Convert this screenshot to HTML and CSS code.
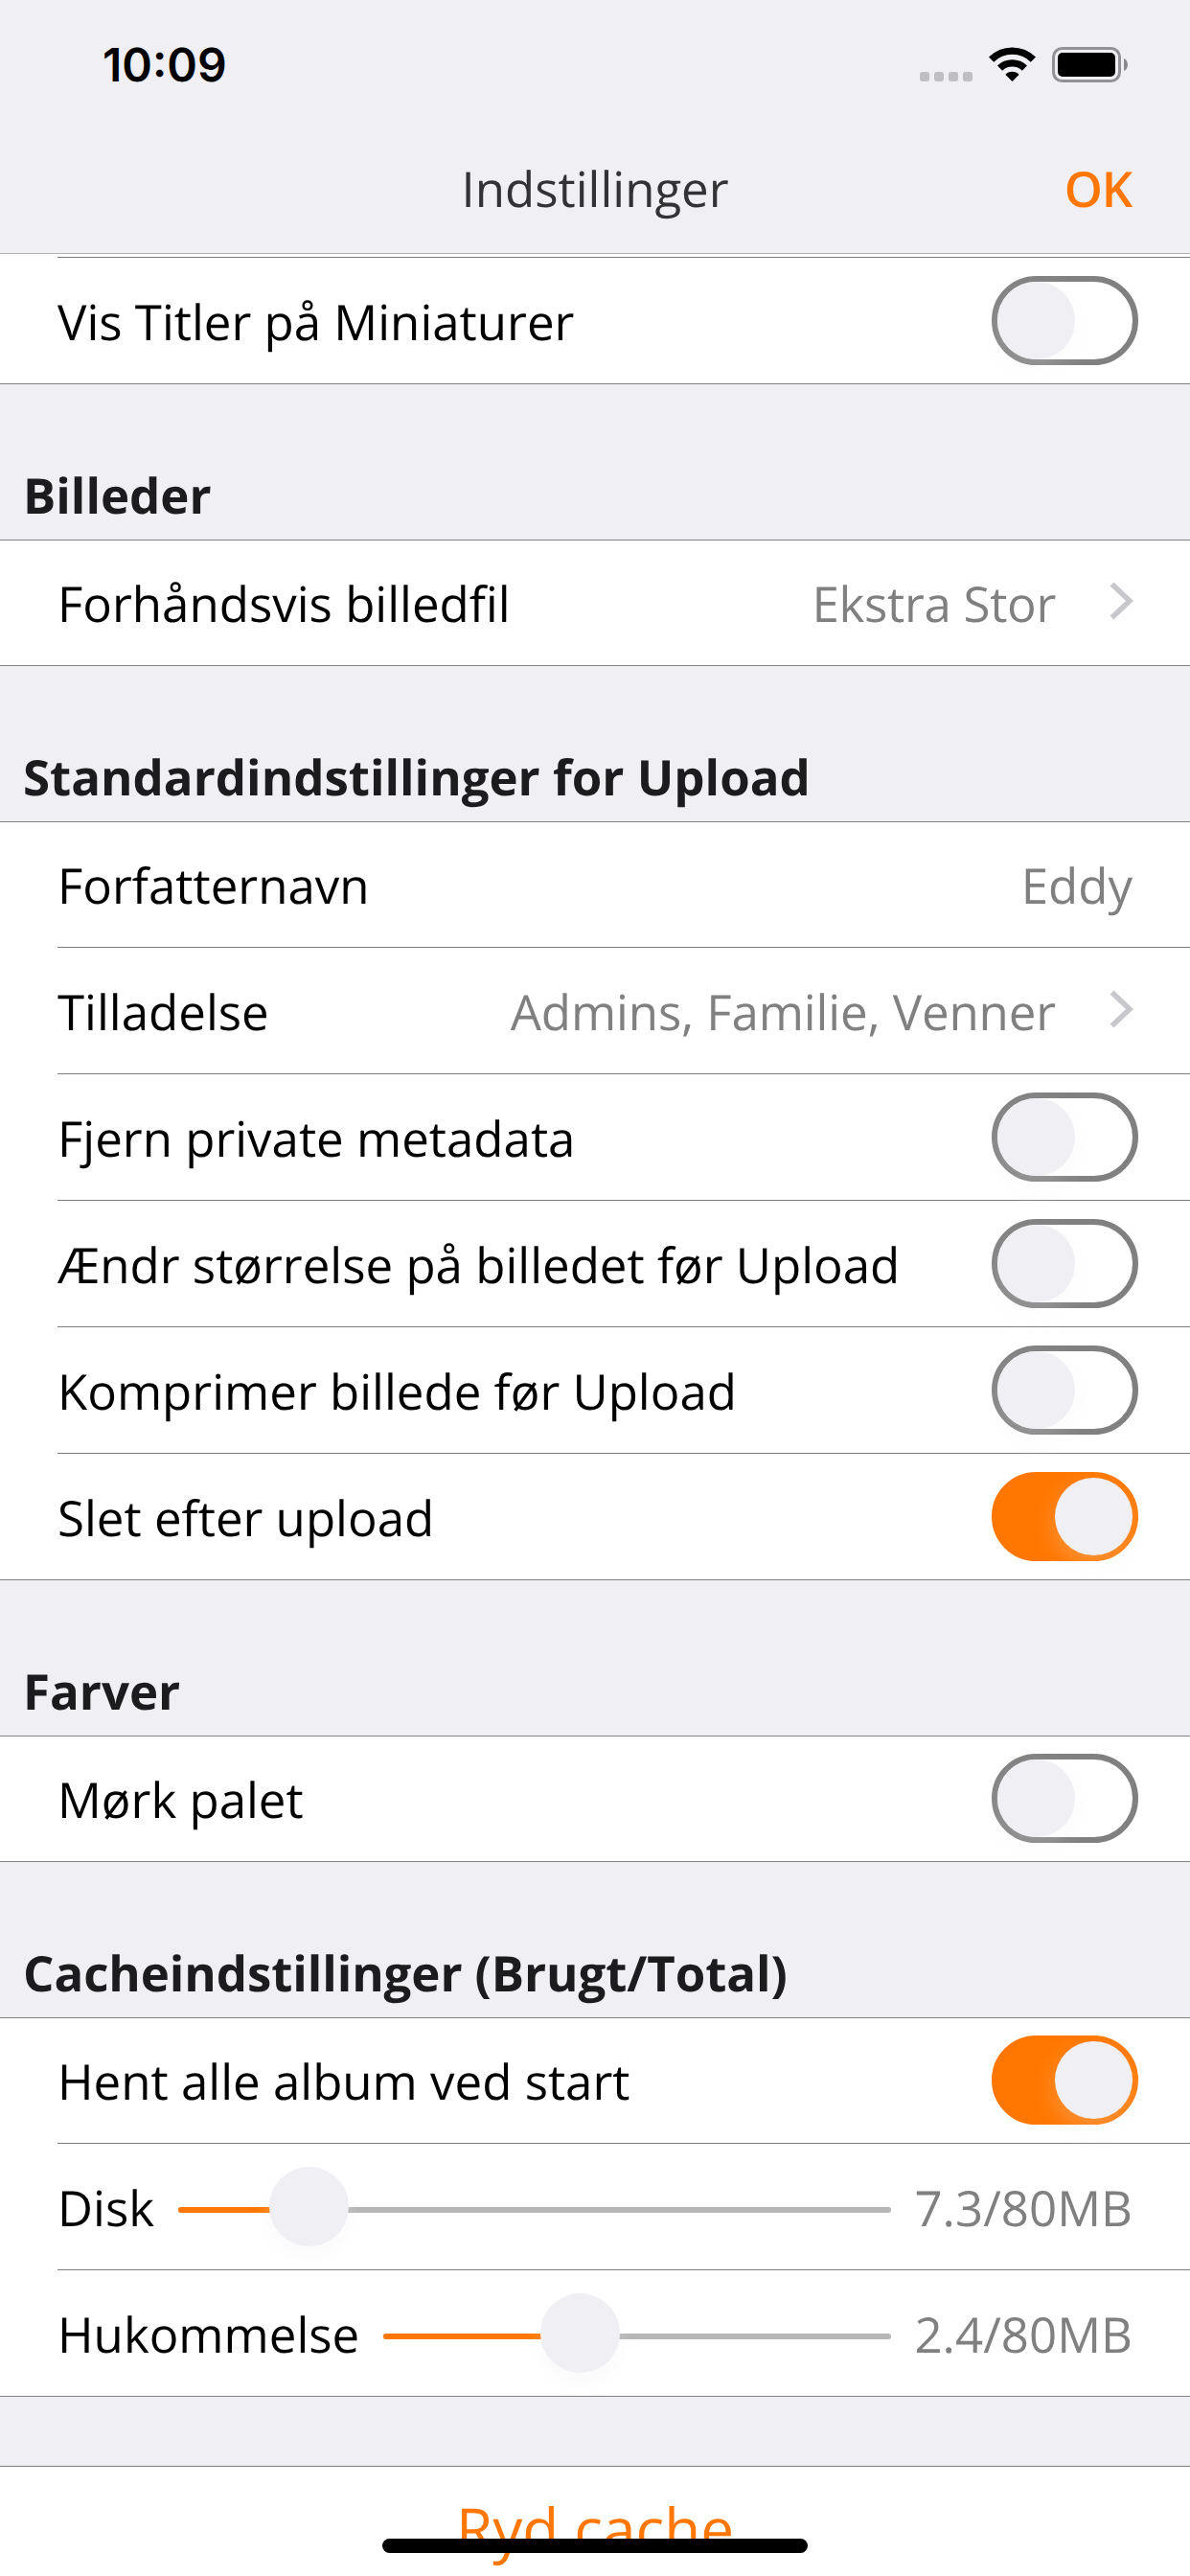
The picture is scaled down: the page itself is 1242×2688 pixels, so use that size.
FILE: index.html
```html
<!DOCTYPE html>
<html lang="da">
<head>
<meta charset="utf-8">
<title>Indstillinger</title>
<link rel="stylesheet" href="styles.css">
</head>
<body>
<div class="screen">
  <header class="header">
    <div class="status">
      <span class="time">10:09</span>
      <svg class="status-icons" width="218" height="38" viewBox="0 0 218 38">
        <g fill="#bfbfc2">
          <rect x="0" y="26" width="10" height="10" rx="3"/>
          <rect x="15" y="26" width="10" height="10" rx="3"/>
          <rect x="30" y="26" width="10" height="10" rx="3"/>
          <rect x="45" y="26" width="10" height="10" rx="3"/>
        </g>
        <g fill="none" stroke="#000" stroke-width="7.4">
          <path d="M74.6 13.2A31 31 0 0 1 118.4 13.2"/>
          <path d="M83.6 22.2A18.4 18.4 0 0 1 109.4 22.2"/>
        </g>
        <path d="M96.5 36L89.8 29.3Q89.3 28.7 90 28.1A10.5 10.5 0 0 1 103 28.1Q103.700 28.700 103.200 29.300Z"/>
        <rect x="139.500" y="1.500" width="69" height="34" rx="9" fill="none" stroke="#929294" stroke-width="3"/>
        <rect x="144" y="6" width="60" height="25" rx="5"/>
        <path d="M213 12C218.300 14 218.300 23 213 25Z" fill="#8a8a8c"/>
      </svg>
    </div>
    <nav class="navbar">
      <h1 class="title">Indstillinger</h1>
      <a class="done">OK</a>
    </nav>
  </header>

  <main class="content">
    <section class="group continued">
      <div class="row with-toggle"><span class="label">Vis Titler på Miniaturer</span><span class="toggle"></span></div>
    </section>

    <h2 class="heading">Billeder</h2>
    <section class="group">
      <div class="row"><span class="label">Forhåndsvis billedfil</span><span class="value size">Ekstra Stor</span>
        <svg class="chevron" width="25" height="40" viewBox="0 0 25 40"><path d="M2.500 2.500L21 20L2.500 37.500"/></svg></div>
    </section>

    <h2 class="heading">Standardindstillinger for Upload</h2>
    <section class="group">
      <div class="row"><span class="label">Forfatternavn</span><span class="value">Eddy</span></div>
      <div class="row"><span class="label">Tilladelse</span><span class="value access">Admins, Familie, Venner</span>
        <svg class="chevron" width="25" height="40" viewBox="0 0 25 40"><path d="M2.500 2.500L21 20L2.500 37.500"/></svg></div>
      <div class="row with-toggle"><span class="label">Fjern private metadata</span><span class="toggle"></span></div>
      <div class="row with-toggle"><span class="label">Ændr størrelse på billedet før Upload</span><span class="toggle"></span></div>
      <div class="row with-toggle"><span class="label">Komprimer billede før Upload</span><span class="toggle"></span></div>
      <div class="row with-toggle"><span class="label">Slet efter upload</span><span class="toggle on"></span></div>
    </section>

    <h2 class="heading">Farver</h2>
    <section class="group">
      <div class="row with-toggle"><span class="label">Mørk palet</span><span class="toggle"></span></div>
    </section>

    <h2 class="heading cache">Cacheindstillinger (Brugt/Total)</h2>
    <section class="group">
      <div class="row with-toggle"><span class="label">Hent alle album ved start</span><span class="toggle on"></span></div>
      <div class="row"><span class="label">Disk</span>
        <div class="slider"><div class="track"><div class="fill" style="width:18.4%"></div></div><div class="knob" style="left:18.4%"></div></div>
        <span class="value">7.3/80MB</span></div>
      <div class="row"><span class="label">Hukommelse</span>
        <div class="slider"><div class="track"><div class="fill" style="width:38.8%"></div></div><div class="knob" style="left:38.8%"></div></div>
        <span class="value">2.4/80MB</span></div>
    </section>

    <section class="group action">
      <a class="clear">Ryd cache</a>
    </section>
  </main>
  <div class="home-indicator"></div>
</div>
</body>
</html>
```

FILE: styles.css
```css
* {
  box-sizing: border-box;
}

body {
  margin: 0;
  background: #efeff4;
  font-family: "Open Sans", "Noto Sans", sans-serif;
  font-size: 51px;
  line-height: 70px;
  text-rendering: geometricPrecision;
  color: #000;
}

.screen {
  position: relative;
  width: 1242px;
  height: 2688px;
  overflow: hidden;
}

.header {
  height: 265px;
  border-bottom: 1px solid #b2b2b5;
}

.status {
  display: flex;
  justify-content: space-between;
  align-items: flex-start;
  height: 132px;
  padding: 49px 64px 0 107px;
}

.time {
  margin-top: -11px;
  font-family: Inter, sans-serif;
  font-weight: 600;
  font-size: 48px;
  line-height: 60px;
}

.navbar {
  display: grid;
  grid-template-columns: 1fr auto 1fr;
  padding: 29px 60px 0;
}

.title {
  grid-column: 2;
  margin: 0;
  font-size: 51px;
  font-weight: 400;
  color: #333335;
}

.done {
  justify-self: end;
  margin-right: 1px;
  font-weight: 600;
  letter-spacing: -1.2px;
  color: #ff7700;
}

.group {
  background: #fff;
  border-top: 1px solid #808080;
}

.continued {
  padding-top: 3px;
  border-top: 0;
}

.row {
  display: flex;
  align-items: flex-start;
  height: 132px;
  padding: 19px 60px 0 0;
  margin-left: 60px;
  border-bottom: 1px solid #808080;
}

.row:first-child {
  height: 131px;
  padding-top: 18px;
}

.row:last-child {
  margin-left: 0;
  padding-left: 60px;
}

.continued .row {
  height: 133px;
  padding-top: 20px;
  background: linear-gradient(#808080, #808080) 60px 0 / 100% 1px no-repeat;
}

.row.with-toggle {
  padding-right: 54px;
}

.label,
.value {
  margin-top: 12px;
  white-space: nowrap;
}

.value {
  margin-left: auto;
  color: #808080;
}

.size {
  letter-spacing: -0.3px;
}

.access {
  letter-spacing: -0.13px;
}

.chevron {
  flex: none;
  margin: 25px -1px 0 56px;
  fill: none;
  stroke: #c7c7cc;
  stroke-width: 5.5;
}

.toggle {
  display: flex;
  width: 153px;
  height: 93px;
  margin-left: auto;
  border: 6px solid #808080;
  border-radius: 47px;
}

.toggle::before {
  content: "";
  width: 81px;
  height: 81px;
  border-radius: 50%;
  background: #efeff4;
  box-shadow: 0 9px 24px rgba(239, 239, 244, 0.25);
}

.toggle.on {
  justify-content: flex-end;
  border-color: #ff7700;
  background: #ff7700;
}

.slider {
  position: relative;
  flex: 1;
  height: 83px;
  margin: 5px 24px 0 25px;
  padding-top: 42px;
}

.track {
  height: 6px;
  border-radius: 3px;
  background: #b6b6b6;
  overflow: hidden;
}

.fill {
  height: 100%;
  background: #ff7700;
}

.knob {
  position: absolute;
  top: 0;
  width: 83px;
  height: 83px;
  margin-left: -42px;
  border-radius: 50%;
  background: #efeff4;
  box-shadow: 0 10px 18px rgba(239, 239, 244, 0.3);
}

.heading {
  height: 162px;
  margin: 0;
  padding: 80px 24px 0;
  font-size: 51px;
  font-weight: 700;
  color: #1c1c1e;
}

.cache {
  letter-spacing: -0.08px;
}

.action {
  display: flex;
  justify-content: center;
  height: 132px;
  margin-top: 72px;
  padding-top: 24px;
}

.clear {
  font-size: 62px;
  line-height: 82px;
  color: #ff7700;
}

.home-indicator {
  position: absolute;
  left: 399px;
  bottom: 24px;
  width: 444px;
  height: 15px;
  border-radius: 8px;
  background: #000;
}
```
